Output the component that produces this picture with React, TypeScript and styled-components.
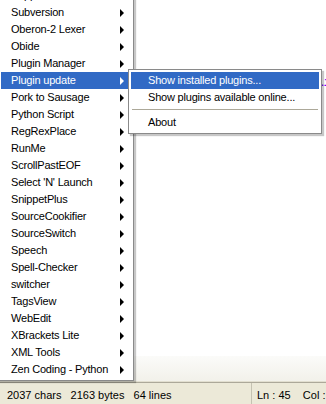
import styled, { createGlobalStyle } from "styled-components";

const GlobalStyle = createGlobalStyle`
	html, body {
		margin: 0;
		padding: 0;
		background: #ffffff;
	}
	body {
		font-family: "Liberation Sans", Arial, sans-serif;
		font-size: 11px;
		color: #000000;
	}
	* {
		box-sizing: border-box;
	}
`;

const Window = styled.div`
	position: relative;
	width: 326px;
	height: 404px;
	overflow: hidden;
	display: flex;
	flex-direction: column;
	background: #ffffff;
`;

const Editor = styled.div`
	flex: 1;
	background: #ffffff;
	padding-top: 77px;
`;

const CodeLine = styled.div`
	text-align: right;
	margin-right: -5px;
	font-family: "Liberation Mono", monospace;
	font-size: 12px;
	line-height: 12px;
	color: #8000ff;
	font-weight: bold;
`;

const ScrollStrip = styled.div`
	height: 26px;
	background: linear-gradient(#fbfbf9, #f2f1ea);
	border-bottom: 1px solid #e2dfd0;
`;

const StatusBar = styled.div`
	height: 22px;
	display: flex;
	background: #ece9d8;
	border-top: 1px solid #aca899;
	white-space: pre;
	overflow: hidden;
`;

const StatusPanel = styled.div<{ $width?: number }>`
	flex: ${(p) => (p.$width ? `0 0 ${p.$width}px` : "1")};
	padding: 6px 0 0 ${(p) => (p.$width ? 7 : 5)}px;
	line-height: 13px;
	border-right: ${(p) => (p.$width ? "1px solid #c5c2b2" : "none")};
	overflow: hidden;
`;

const Menu = styled.div<{ $top: number; $left: number; $width: number }>`
	position: absolute;
	top: ${(p) => p.$top}px;
	left: ${(p) => p.$left}px;
	width: ${(p) => p.$width}px;
	background: #ffffff;
	border: 1px solid #8a8a8a;
	padding: 2px;
	box-shadow: 2px 2px 1px rgba(0, 0, 0, 0.22);
	display: flex;
	flex-direction: column;
	letter-spacing: -0.2px;
`;

const Item = styled.div<{ $active?: boolean; $indent: number }>`
	height: 17px;
	display: flex;
	align-items: center;
	padding: 0 7px 0 ${(p) => p.$indent}px;
	background: ${(p) => (p.$active ? "#316ac5" : "transparent")};
	color: ${(p) => (p.$active ? "#ffffff" : "#000000")};
	white-space: nowrap;
`;

const Label = styled.span`
	flex: 1;
	line-height: 13px;
`;

const Arrow = styled.span<{ $active?: boolean }>`
	width: 0;
	height: 0;
	border-top: 4px solid transparent;
	border-bottom: 4px solid transparent;
	border-left: 4px solid ${(p) => (p.$active ? "#ffffff" : "#000000")};
`;

const Separator = styled.div`
	height: 1px;
	margin: 3px 1px 4px 1px;
	background: #aca899;
`;

const plugins = [
	"Support",
	"Subversion",
	"Oberon-2 Lexer",
	"Obide",
	"Plugin Manager",
	"Plugin update",
	"Pork to Sausage",
	"Python Script",
	"RegRexPlace",
	"RunMe",
	"ScrollPastEOF",
	"Select 'N' Launch",
	"SnippetPlus",
	"SourceCookifier",
	"SourceSwitch",
	"Speech",
	"Spell-Checker",
	"switcher",
	"TagsView",
	"WebEdit",
	"XBrackets Lite",
	"XML Tools",
	"Zen Coding - Python",
];

export default function App() {
	return (
		<Window>
			<GlobalStyle />
			<Editor>
				<CodeLine>Li</CodeLine>
			</Editor>
			<ScrollStrip />
			<StatusBar>
				<StatusPanel $width={252}>2037 chars   2163 bytes   64 lines</StatusPanel>
				<StatusPanel>Ln : 45    Col : 12    Sel : 0</StatusPanel>
			</StatusBar>

			<Menu $top={-16} $left={-2} $width={136}>
				{plugins.map((name) => (
					<Item key={name} $indent={10} $active={name === "Plugin update"}>
						<Label>{name}</Label>
						<Arrow $active={name === "Plugin update"} />
					</Item>
				))}
			</Menu>

			<Menu $top={69} $left={128} $width={194}>
				<Item $indent={17} $active>
					<Label>Show installed plugins...</Label>
				</Item>
				<Item $indent={17}>
					<Label>Show plugins available online...</Label>
				</Item>
				<Separator />
				<Item $indent={17}>
					<Label>About</Label>
				</Item>
			</Menu>
		</Window>
	);
}
